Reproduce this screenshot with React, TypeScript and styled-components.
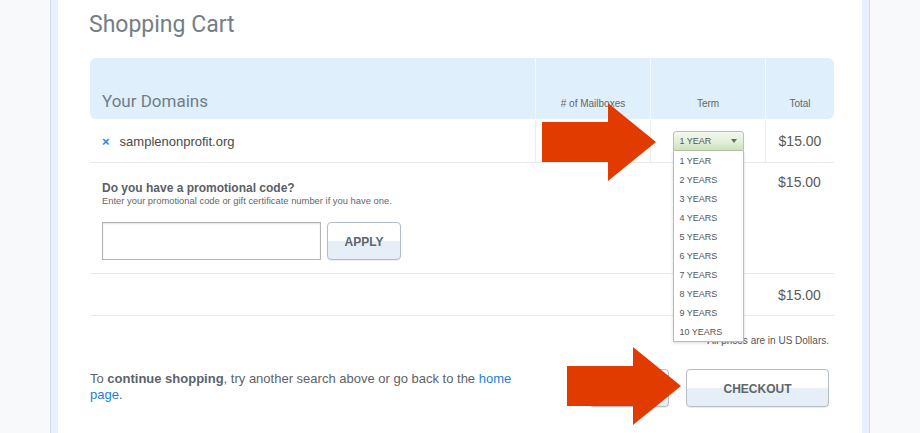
import React from "react";
import styled, { createGlobalStyle } from "styled-components";

const Global = createGlobalStyle`
  html, body { margin: 0; padding: 0; background: #f8f9fa; }
  body { font-family: "Liberation Sans", Arial, sans-serif; }
  * { box-sizing: border-box; }
`;

const Viewport = styled.div`
  position: relative;
  width: 920px;
  height: 433px;
  overflow: hidden;
  display: flex;
  justify-content: center;
`;

const Frame = styled.div`
  width: 820px;
  height: 100%;
  padding: 0 7px;
  background: #e6f1fc;
  border-left: 1px solid #d2dbe4;
  border-right: 1px solid #d2dbe4;
`;

const Sheet = styled.div`
  background: #fff;
  height: 100%;
  padding: 10px 28px 0 32px;
`;

const Title = styled.h1`
  margin: 0 0 0 -1px;
  font-family: Roboto, "Open Sans", sans-serif;
  font-weight: 400;
  font-size: 23px;
  line-height: 30px;
  color: #747e88;
  height: 30px;
`;

const Table = styled.div`
  margin-top: 18px;
  display: flex;
  flex-direction: column;
`;

const cols = "445px 115px 115px 1fr";

const HeadRow = styled.div`
  display: grid;
  grid-template-columns: ${cols};
  height: 61px;
  background: #dfeffc;
  border-radius: 6px;
  margin-bottom: 1px;
`;

const HeadCell = styled.div<{ $first?: boolean }>`
  display: flex;
  align-items: flex-end;
  justify-content: ${(p) => (p.$first ? "flex-start" : "center")};
  padding: ${(p) => (p.$first ? "0 0 8px 12px" : "0 0 10px 0")};
  border-left: ${(p) => (p.$first ? "none" : "1px solid #f3f9fe")};
  font-family: ${(p) => (p.$first ? 'Roboto, "Open Sans", sans-serif' : '"Liberation Sans", Arial, sans-serif')};
  font-size: ${(p) => (p.$first ? "17px" : "10px")};
  color: ${(p) => (p.$first ? "#6f7d8a" : "#666")};
`;

const Row = styled.div<{ $h: number }>`
  display: grid;
  grid-template-columns: ${cols};
  height: ${(p) => p.$h}px;
  border-bottom: 1px solid #e9e9e9;
`;

const Cell = styled.div<{ $divider?: boolean; $span?: number; $top?: number }>`
  position: relative;
  display: flex;
  align-items: ${(p) => (p.$top !== undefined ? "flex-start" : "center")};
  padding-top: ${(p) => p.$top ?? 0}px;
  border-left: ${(p) => (p.$divider ? "1px solid #eeeeee" : "none")};
  grid-column: span ${(p) => p.$span ?? 1};
`;

const DomainCell = styled(Cell)`
  padding-left: 12px;
  gap: 10px;
`;

const Remove = styled.span`
  color: #2a86d6;
  font-weight: bold;
  font-size: 13px;
  line-height: 1;
`;

const Domain = styled.span`
  font-size: 13px;
  color: #4a4a4a;
`;

const Price = styled.div`
  width: 100%;
  text-align: center;
  font-size: 14px;
  color: #5a5a5a;
`;

const SelectWrap = styled.div`
  position: relative;
  margin: 0 auto;
  width: 71px;
`;

const SelectBox = styled.div`
  height: 20px;
  border: 1px solid #b4c8a6;
  border-radius: 3px 3px 0 0;
  background: linear-gradient(#f3f9ee, #e2efd8 55%, #cde2bd);
  display: flex;
  align-items: center;
  justify-content: space-between;
  padding: 0 6px;
  font-size: 9px;
  color: #555;
`;

const Caret = styled.span`
  width: 0;
  height: 0;
  border-left: 3px solid transparent;
  border-right: 3px solid transparent;
  border-top: 4px solid #6a6a6a;
`;

const Menu = styled.ul`
  position: absolute;
  top: 20px;
  left: 0;
  width: 71px;
  margin: 0;
  padding: 0;
  list-style: none;
  background: #fff;
  border: 1px solid #bcbcbc;
  border-top: none;
  box-shadow: 0 1px 3px rgba(0, 0, 0, 0.15);
  z-index: 5;
`;

const MenuItem = styled.li`
  height: 19px;
  line-height: 20px;
  padding-left: 6px;
  font-size: 9px;
  color: #555;
`;

const Promo = styled.div`
  padding: 18px 0 0 12px;
  display: flex;
  flex-direction: column;
`;

const PromoTitle = styled.div`
  font-size: 12px;
  font-weight: bold;
  color: #5a5f66;
  line-height: 14px;
`;

const PromoHint = styled.div`
  font-size: 9.4px;
  color: #666;
  line-height: 11px;
`;

const PromoForm = styled.div`
  display: flex;
  gap: 6px;
  margin-top: 16px;
`;

const CodeInput = styled.input`
  width: 219px;
  height: 38px;
  border: 1px solid #b3b3b3;
  box-shadow: inset 0 1px 2px rgba(0, 0, 0, 0.12);
  background: #fff;
  outline: none;
`;

const Button = styled.button<{ $w: number }>`
  width: ${(p) => p.$w}px;
  height: 38px;
  border: 1px solid #b4bcc4;
  border-radius: 4px;
  background: linear-gradient(#ffffff 0%, #ffffff 48%, #e6eef7 52%, #e6eef7 100%);
  box-shadow: 0 1px 1px rgba(0, 0, 0, 0.08);
  font-family: "Liberation Sans", Arial, sans-serif;
  font-weight: bold;
  font-size: 12px;
  color: #5f656b;
  padding: 2px 0 0 0;
`;

const Note = styled.div`
  text-align: right;
  padding-right: 5px;
  margin-top: 19px;
  font-size: 10px;
  color: #555;
  line-height: 12px;
`;

const Footer = styled.div`
  display: flex;
  justify-content: space-between;
  align-items: flex-start;
  margin-top: 22px;
  padding-right: 5px;
`;

const Continue = styled.div`
  width: 432px;
  margin-top: 2px;
  font-size: 13px;
  line-height: 16px;
  color: #5d636a;
  b { color: #5d636a; }
  a { color: #1b7fd8; text-decoration: none; }
`;

const Line = styled.div`
  white-space: nowrap;
`;

const Actions = styled.div`
  display: flex;
  gap: 17px;
`;

const Arrow = styled.svg<{ $x: number; $y: number }>`
  position: absolute;
  left: ${(p) => p.$x}px;
  top: ${(p) => p.$y}px;
  z-index: 10;
`;

const RedArrow = ({ x, y }: { x: number; y: number }) => (
  <Arrow $x={x} $y={y} width="114" height="78" viewBox="0 0 114 78">
    <polygon points="0,19 66,19 66,0 114,39 66,78 66,59 0,59" fill="#e23b00" />
  </Arrow>
);

const terms = ["1 YEAR", "2 YEARS", "3 YEARS", "4 YEARS", "5 YEARS", "6 YEARS", "7 YEARS", "8 YEARS", "9 YEARS", "10 YEARS"];

export default function App() {
  return (
    <>
      <Global />
      <Viewport>
        <Frame>
          <Sheet>
            <Title>Shopping Cart</Title>
            <Table>
              <HeadRow>
                <HeadCell $first>Your Domains</HeadCell>
                <HeadCell># of Mailboxes</HeadCell>
                <HeadCell>Term</HeadCell>
                <HeadCell>Total</HeadCell>
              </HeadRow>
              <Row $h={43}>
                <DomainCell>
                  <Remove>×</Remove>
                  <Domain>samplenonprofit.org</Domain>
                </DomainCell>
                <Cell $divider />
                <Cell $divider>
                  <SelectWrap>
                    <SelectBox>
                      <span>1 YEAR</span>
                      <Caret />
                    </SelectBox>
                    <Menu>
                      {terms.map((t) => (
                        <MenuItem key={t}>{t}</MenuItem>
                      ))}
                    </Menu>
                  </SelectWrap>
                </Cell>
                <Cell $divider>
                  <Price>$15.00</Price>
                </Cell>
              </Row>
              <Row $h={111}>
                <Cell $span={3} $top={0}>
                  <Promo>
                    <PromoTitle>Do you have a promotional code?</PromoTitle>
                    <PromoHint>Enter your promotional code or gift certificate number if you have one.</PromoHint>
                    <PromoForm>
                      <CodeInput />
                      <Button $w={74}>APPLY</Button>
                    </PromoForm>
                  </Promo>
                </Cell>
                <Cell $top={11}>
                  <Price>$15.00</Price>
                </Cell>
              </Row>
              <Row $h={42}>
                <Cell $span={3} />
                <Cell>
                  <Price>$15.00</Price>
                </Cell>
              </Row>
            </Table>
            <Note>All prices are in US Dollars.</Note>
            <Footer>
              <Continue>
                <Line>
                  To <b>continue shopping</b>, try another search above or go back to the <a href="#">home</a>
                </Line>
                <Line>
                  <a href="#">page</a>.
                </Line>
              </Continue>
              <Actions>
                <Button $w={80} aria-label="Update" />
                <Button $w={143}>CHECKOUT</Button>
              </Actions>
            </Footer>
          </Sheet>
        </Frame>
        <RedArrow x={542} y={103} />
        <RedArrow x={567} y={347} />
      </Viewport>
    </>
  );
}
